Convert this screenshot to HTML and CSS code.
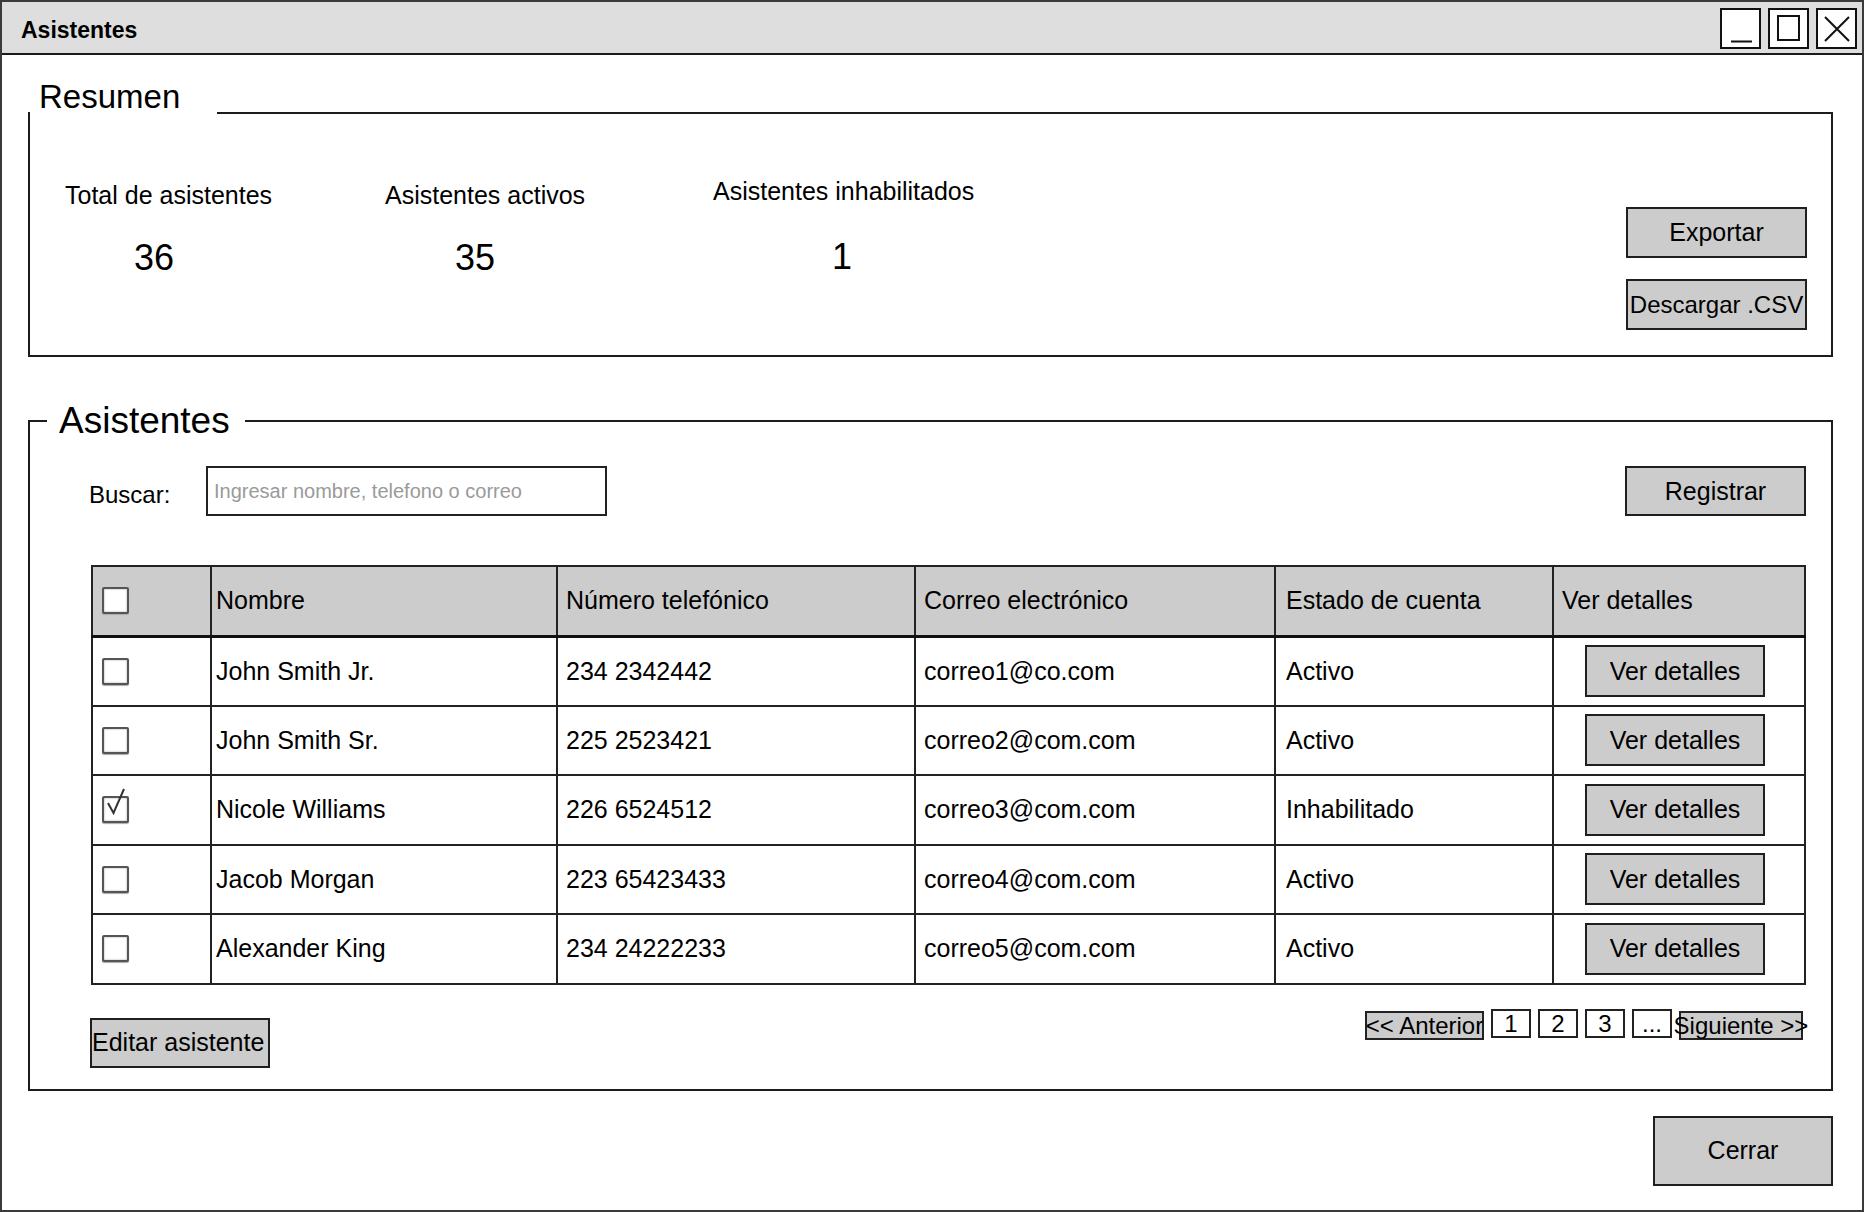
FILE: index.html
```html
<!DOCTYPE html>
<html lang="es">
<head>
<meta charset="utf-8">
<title>Asistentes</title>
<link rel="stylesheet" href="styles.css">
</head>
<body>
<div class="window">
  <header class="titlebar">
    <span class="title">Asistentes</span>
    <div class="win-controls">
      <span class="win-btn"><svg width="37" height="37" viewBox="0 0 37 37"><path d="M9 31.5H30" stroke="#111" stroke-width="2"/></svg></span>
      <span class="win-btn"><svg width="37" height="37" viewBox="0 0 37 37"><rect x="8" y="6" width="21" height="24" fill="none" stroke="#111" stroke-width="2"/></svg></span>
      <span class="win-btn"><svg width="37" height="37" viewBox="0 0 37 37"><path d="M7 7L31 31M31 7L7 31" stroke="#111" stroke-width="2"/></svg></span>
    </div>
  </header>

  <main class="content">
    <fieldset class="group group-summary">
      <legend class="legend legend-summary">Resumen</legend>
      <div class="summary-body">
        <div class="stats">
          <div class="stat stat-total">
            <span class="stat-label">Total de asistentes</span>
            <span class="stat-value">36</span>
          </div>
          <div class="stat stat-active">
            <span class="stat-label">Asistentes activos</span>
            <span class="stat-value">35</span>
          </div>
          <div class="stat stat-disabled">
            <span class="stat-label">Asistentes inhabilitados</span>
            <span class="stat-value">1</span>
          </div>
        </div>
        <div class="summary-actions">
          <button class="btn btn-side">Exportar</button>
          <button class="btn btn-side btn-csv">Descargar .CSV</button>
        </div>
      </div>
    </fieldset>

    <fieldset class="group group-list">
      <legend class="legend legend-list">Asistentes</legend>
      <div class="list-body">
        <div class="toolbar">
          <label class="search-label" for="buscar">Buscar:</label>
          <input id="buscar" class="search-input" type="text" placeholder="Ingresar nombre, telefono o correo">
          <button class="btn btn-register">Registrar</button>
        </div>

        <table class="grid">
          <colgroup>
            <col class="c-check"><col class="c-name"><col class="c-phone"><col class="c-mail"><col class="c-state"><col class="c-detail">
          </colgroup>
          <thead>
            <tr>
              <th class="cell-check"><span class="cb"></span></th>
              <th class="cell-name">Nombre</th>
              <th>Número telefónico</th>
              <th>Correo electrónico</th>
              <th class="cell-state">Estado de cuenta</th>
              <th>Ver detalles</th>
            </tr>
          </thead>
          <tbody>
            <tr>
              <td class="cell-check"><span class="cb"></span></td>
              <td class="cell-name">John Smith Jr.</td>
              <td>234 2342442</td>
              <td>correo1@co.com</td>
              <td class="cell-state">Activo</td>
              <td class="cell-detail"><button class="btn btn-detail">Ver detalles</button></td>
            </tr>
            <tr>
              <td class="cell-check"><span class="cb"></span></td>
              <td class="cell-name">John Smith Sr.</td>
              <td>225 2523421</td>
              <td>correo2@com.com</td>
              <td class="cell-state">Activo</td>
              <td class="cell-detail"><button class="btn btn-detail">Ver detalles</button></td>
            </tr>
            <tr>
              <td class="cell-check"><span class="cb cb-checked"><svg class="tick" width="24" height="34" viewBox="0 0 24 34"><path d="M4 17L9.5 27L20 3" fill="none" stroke="#333" stroke-width="2"/></svg></span></td>
              <td class="cell-name">Nicole Williams</td>
              <td>226 6524512</td>
              <td>correo3@com.com</td>
              <td class="cell-state">Inhabilitado</td>
              <td class="cell-detail"><button class="btn btn-detail">Ver detalles</button></td>
            </tr>
            <tr>
              <td class="cell-check"><span class="cb"></span></td>
              <td class="cell-name">Jacob Morgan</td>
              <td>223 65423433</td>
              <td>correo4@com.com</td>
              <td class="cell-state">Activo</td>
              <td class="cell-detail"><button class="btn btn-detail">Ver detalles</button></td>
            </tr>
            <tr>
              <td class="cell-check"><span class="cb"></span></td>
              <td class="cell-name">Alexander King</td>
              <td>234 24222233</td>
              <td>correo5@com.com</td>
              <td class="cell-state">Activo</td>
              <td class="cell-detail"><button class="btn btn-detail">Ver detalles</button></td>
            </tr>
          </tbody>
        </table>

        <div class="list-footer">
          <button class="btn btn-edit">Editar asistente</button>
          <nav class="pager">
            <span class="pg pg-nav pg-prev">&lt;&lt; Anterior</span>
            <span class="pg pg-num">1</span>
            <span class="pg pg-num">2</span>
            <span class="pg pg-num">3</span>
            <span class="pg pg-num">...</span>
            <span class="pg pg-nav pg-next">Siguiente &gt;&gt;</span>
          </nav>
        </div>
      </div>
    </fieldset>

    <div class="dialog-actions">
      <button class="btn btn-close">Cerrar</button>
    </div>
  </main>
</div>
</body>
</html>
```

FILE: styles.css
```css
* { box-sizing: border-box; }

html, body {
  margin: 0;
  padding: 0;
  background: #ffffff;
}

body {
  font-family: "Liberation Sans", Arial, sans-serif;
  color: #000;
}

.window {
  width: 1864px;
  height: 1212px;
  border: 2px solid #3a3a3a;
  background: #fff;
  overflow: hidden;
  display: flex;
  flex-direction: column;
}

/* ---------- title bar ---------- */
.titlebar {
  height: 53px;
  flex: none;
  background: #dedede;
  border-bottom: 2px solid #1a1a1a;
  display: flex;
  align-items: center;
  justify-content: space-between;
  padding: 0 5px 0 19px;
}

.title {
  font-size: 23px;
  font-weight: bold;
  padding-top: 5px;
}

.win-controls {
  display: flex;
  gap: 7px;
  padding-top: 1px;
}

.win-btn {
  width: 41px;
  height: 41px;
  border: 2px solid #111;
  background: #fff;
  display: block;
}

.win-btn svg { display: block; }

/* ---------- main ---------- */
.content {
  flex: 1;
  padding: 21px 29px 0 26px;
  display: flex;
  flex-direction: column;
}

.group {
  margin: 0;
  padding: 0;
  border: 2px solid #1c1c1c;
  min-width: 0;
}

.legend {
  margin: 0;
}

.legend-summary {
  font-size: 33px;
  line-height: 36px;
  padding: 3px 37px 35px 9px;
}

.legend-list {
  font-size: 37px;
  line-height: 42px;
  padding: 2px 15px 2px 12px;
  margin-left: 17px;
}

/* ---------- summary ---------- */
.summary-body {
  height: 205px;
  display: flex;
  align-items: flex-start;
  padding: 30px 24px 0 35px;
}

.stats {
  display: flex;
  align-items: flex-start;
}

.stat {
  display: flex;
  flex-direction: column;
  align-items: flex-start;
}

.stat-total { width: 320px; }
.stat-active { width: 328px; }

.stat-label {
  font-size: 25px;
  line-height: 30px;
  white-space: nowrap;
}

.stat-value {
  font-size: 36px;
  line-height: 44px;
  margin-top: 26px;
}

.stat-total .stat-value { margin-left: 69px; }
.stat-active .stat-value { margin-left: 70px; }
.stat-disabled .stat-label { margin-top: -4px; }
.stat-disabled .stat-value { margin-left: 119px; margin-top: 29px; }

.summary-actions {
  margin-left: auto;
  margin-top: 27px;
  display: flex;
  flex-direction: column;
  gap: 21px;
}

/* ---------- buttons ---------- */
.btn {
  font-family: "Liberation Sans", Arial, sans-serif;
  font-size: 25px;
  color: #000;
  background: #cccccc;
  border: 2px solid #1f1f1f;
  border-radius: 0;
  padding: 0;
  white-space: nowrap;
  display: flex;
  align-items: center;
  justify-content: center;
}

.btn-side {
  width: 181px;
  height: 51px;
}

.btn-csv {
  font-size: 24px;
}

.btn-register {
  width: 181px;
  height: 50px;
  margin-left: auto;
}

.btn-detail {
  width: 180px;
  height: 52px;
  margin: 0;
}

.btn-edit {
  width: 180px;
  height: 50px;
  margin-left: -1px;
  justify-content: flex-start;
  overflow: visible;
}

.btn-close {
  width: 180px;
  height: 70px;
}

/* ---------- list ---------- */
.group-list {
  margin-top: 41px;
}

.list-body {
  padding: 22px 25px 21px 61px;
}

.toolbar {
  display: flex;
  align-items: center;
  height: 50px;
}

.search-label {
  width: 117px;
  flex: none;
  font-size: 24px;
  margin-left: -2px;
  padding-top: 8px;
}

.search-input {
  width: 401px;
  height: 50px;
  border: 2px solid #222;
  padding: 0 6px;
  font-family: "Liberation Sans", Arial, sans-serif;
  font-size: 20px;
  color: #000;
  background: #fff;
  outline: none;
}

.search-input::placeholder {
  color: #9a9a9a;
}

.grid {
  margin-top: 49px;
  width: 100%;
  border-collapse: collapse;
  table-layout: fixed;
  border: 2px solid #1a1a1a;
  font-size: 25px;
}

.c-check { width: 119px; }
.c-name { width: 346px; }
.c-phone { width: 358px; }
.c-mail { width: 360px; }
.c-state { width: 278px; }

.grid th,
.grid td {
  border: 2px solid #222;
  padding: 0 8px;
  text-align: left;
  font-weight: normal;
  white-space: nowrap;
  vertical-align: middle;
}

.grid thead tr { height: 70px; }
.grid tbody tr { height: 69.5px; }

.grid th {
  background: #cccccc;
  border-bottom: 3px solid #111;
}

.grid .cell-check { padding-left: 9px; }
.grid .cell-name { padding-left: 4px; }
.grid .cell-state { padding-left: 10px; }
.grid .cell-detail { padding: 0 0 0 31px; }

.cb {
  display: block;
  position: relative;
  width: 27px;
  height: 27px;
  border: 2px solid #555;
  border-radius: 2px;
  background: #fff;
  box-shadow: inset 0 0 2px #999, 0 1px 1px #aaa;
}

.tick {
  position: absolute;
  left: 0;
  top: -12px;
  overflow: visible;
}

/* ---------- footer ---------- */
.list-footer {
  margin-top: 24px;
  display: flex;
  justify-content: space-between;
  align-items: flex-start;
}

.list-footer .btn-edit { margin-top: 9px; }

.pager {
  display: flex;
  gap: 7px;
  margin-right: 3px;
}

.pg {
  height: 29px;
  border: 2px solid #222;
  font-size: 24px;
  line-height: 25px;
  display: flex;
  align-items: center;
  justify-content: center;
  white-space: nowrap;
}

.pg-num {
  width: 40px;
  background: #fff;
}

.pg-nav {
  background: #cccccc;
  overflow: visible;
}

.pg-prev { width: 119px; margin-top: 2px; }
.pg-next { width: 124px; margin-top: 2px; }

.dialog-actions {
  margin-top: 25px;
  display: flex;
  justify-content: flex-end;
}
```
